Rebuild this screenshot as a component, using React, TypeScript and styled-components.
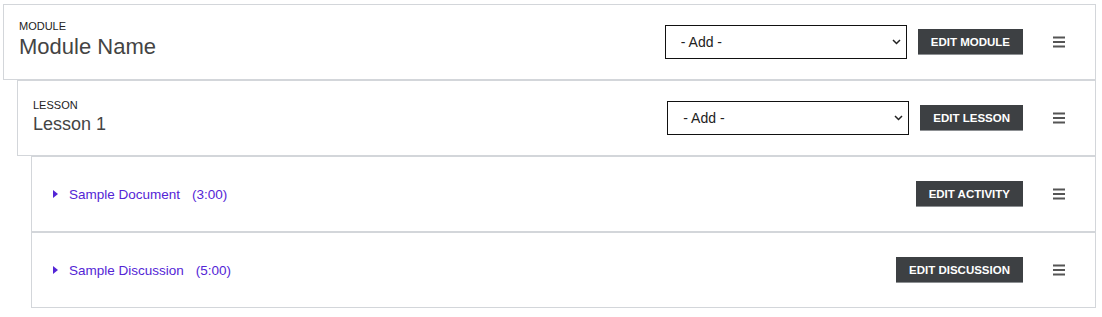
import React from "react";
import styled, { createGlobalStyle } from "styled-components";

const Global = createGlobalStyle`
  html, body { margin: 0; padding: 0; background: #fff; }
  body { font-family: "Liberation Sans", Arial, sans-serif; }
  * { box-sizing: border-box; }
`;

const Page = styled.div`
  padding: 4px 6px 0 3px;
  display: flex;
  flex-direction: column;
`;

const Row = styled.div<{ $level: number }>`
  margin-left: ${(p) => p.$level * 14}px;
  height: 76px;
  border: 1px solid #d3d6da;
  background: #fff;
  display: flex;
  align-items: center;
  padding: 0 30px 0 ${(p) => (p.$level === 2 ? 21 : 15)}px;
`;

const Header = styled.div<{ $top: number }>`
  align-self: flex-start;
  padding-top: ${(p) => p.$top}px;
  display: flex;
  flex-direction: column;
  flex: 1;
`;

const Kind = styled.div`
  font-size: 11px;
  line-height: 12px;
  color: #222;
  text-transform: uppercase;
`;

const Title = styled.div<{ $size: number; $lh: number; $shift: number }>`
  font-size: ${(p) => p.$size}px;
  line-height: ${(p) => p.$lh}px;
  margin-top: ${(p) => p.$shift}px;
  color: #444;
`;

const Activity = styled.a`
  flex: 1;
  display: flex;
  align-items: center;
  color: #5425d6;
  font-size: 13.5px;
  text-decoration: none;
  cursor: pointer;
`;

const Caret = styled.span`
  width: 0;
  height: 0;
  border-top: 4px solid transparent;
  border-bottom: 4px solid transparent;
  border-left: 5px solid #5425d6;
  margin-right: 11px;
`;

const Duration = styled.span`
  margin-left: 12px;
`;

const SelectWrap = styled.div`
  position: relative;
  width: 242px;
  height: 34px;
  margin-right: 11px;
`;

const Select = styled.select`
  appearance: none;
  -webkit-appearance: none;
  width: 100%;
  height: 100%;
  border: 1px solid #111;
  border-radius: 0;
  background: #fff;
  font-family: "Liberation Sans", Arial, sans-serif;
  font-size: 14px;
  color: #222;
  padding: 0 30px 0 15px;
  outline: none;
`;

const Chevron = styled.svg`
  position: absolute;
  right: 6px;
  top: 14px;
  pointer-events: none;
`;

const Button = styled.button`
  height: 26px;
  background: #3d4043;
  color: #fff;
  border: none;
  border-bottom: 1px solid #8d9093;
  font-family: "Liberation Sans", Arial, sans-serif;
  font-weight: bold;
  font-size: 11.5px;
  text-transform: uppercase;
  padding: 0 13px;
  white-space: nowrap;
  cursor: pointer;
`;

const Handle = styled.svg`
  margin-left: 30px;
  flex: none;
`;

const AddSelect = () => (
  <SelectWrap>
    <Select defaultValue="">
      <option value="">- Add -</option>
    </Select>
    <Chevron width="9" height="6" viewBox="0 0 9 6">
      <polyline points="1,1 4.5,4.5 8,1" fill="none" stroke="#222" strokeWidth="1.5" />
    </Chevron>
  </SelectWrap>
);

const DragHandle = () => (
  <Handle width="12" height="12" viewBox="0 0 12 12">
    <rect x="0" y="0.5" width="12" height="2" fill="#555" />
    <rect x="0" y="5" width="12" height="2" fill="#555" />
    <rect x="0" y="9.5" width="12" height="2" fill="#555" />
  </Handle>
);

const activities = [
  { name: "Sample Document", time: "3:00", label: "Edit Activity" },
  { name: "Sample Discussion", time: "5:00", label: "Edit Discussion" },
];

export default function App() {
  return (
    <>
      <Global />
      <Page>
        <Row $level={0}>
          <Header $top={15}>
            <Kind>Module</Kind>
            <Title $size={22} $lh={26} $shift={2}>Module Name</Title>
          </Header>
          <AddSelect />
          <Button>Edit Module</Button>
          <DragHandle />
        </Row>
        <Row $level={1}>
          <Header $top={18}>
            <Kind>Lesson</Kind>
            <Title $size={18} $lh={20} $shift={3}>Lesson 1</Title>
          </Header>
          <AddSelect />
          <Button>Edit Lesson</Button>
          <DragHandle />
        </Row>
        {activities.map((a) => (
          <Row $level={2} key={a.name}>
            <Activity>
              <Caret />
              {a.name}
              <Duration>({a.time})</Duration>
            </Activity>
            <Button>{a.label}</Button>
            <DragHandle />
          </Row>
        ))}
      </Page>
    </>
  );
}
